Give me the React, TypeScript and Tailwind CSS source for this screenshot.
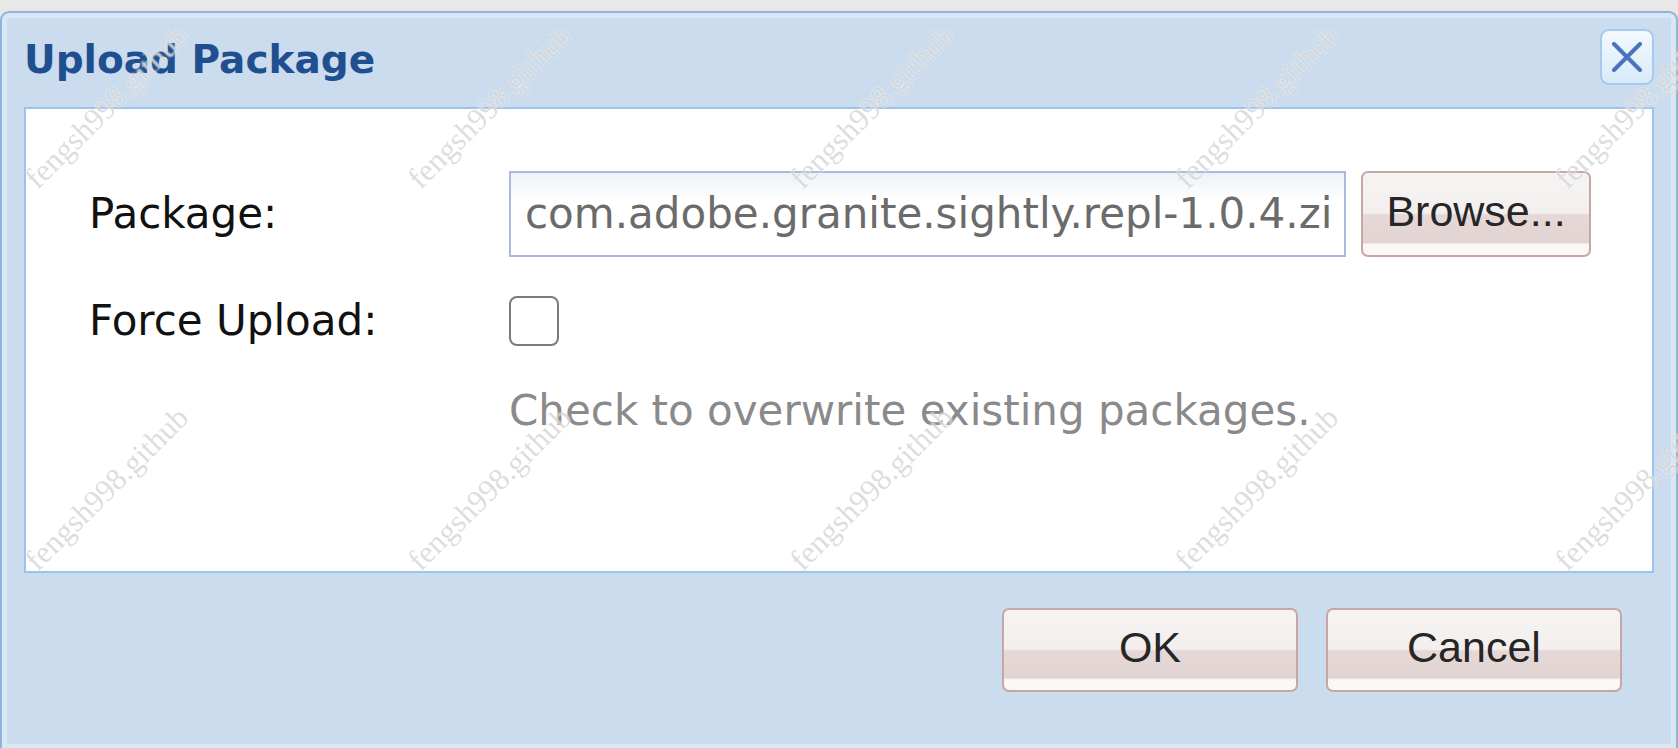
import React from "react";

const marks = [
  { x: 107, y: 107 },
  { x: 490, y: 107 },
  { x: 872, y: 107 },
  { x: 1257, y: 107 },
  { x: 1637, y: 107 },
  { x: 107, y: 489 },
  { x: 490, y: 489 },
  { x: 872, y: 489 },
  { x: 1257, y: 489 },
  { x: 1637, y: 489 },
];

const btn =
  "flex items-center justify-center rounded-[7px] border-2 border-[#c9a6a6] pb-[6px] bg-[linear-gradient(to_bottom,#f6f3f3_0%,#f3efef_49%,#e7d8d8_51%,#e3d4d4_85%,#faf7f7_87%,#faf7f7_100%)] font-['Liberation_Sans',Arial,sans-serif] text-[43px] leading-none text-[#262626]";

function Watermark({ x, y }: { x: number; y: number }) {
  return (
    <span
      className="pointer-events-none absolute -translate-x-1/2 -translate-y-1/2 -rotate-45 whitespace-nowrap font-['Liberation_Serif',serif] text-[31px] text-[rgba(165,165,165,0.38)] [text-shadow:0_0_2px_#ffffff]"
      style={{ left: x, top: y }}
    >
      fengsh998.github
    </span>
  );
}

export default function App() {
  return (
    <div className="relative h-[748px] w-[1678px] overflow-hidden bg-[#e8e8e8] pt-[11px] font-['DejaVu_Sans',Tahoma,sans-serif]">
      <div className="flex h-[740px] flex-col rounded-t-[9px] border-2 border-[#94b3da] bg-[#cadcee] shadow-[inset_0_0_0_5px_#d9e6f3]">
        {/* header */}
        <div className="flex h-[94px] items-center justify-between pl-[22px] pr-[22px]">
          <h1 className="mt-[-1px] text-[39px] font-bold leading-none text-[#1f4f8e]">
            Upload Package
          </h1>
          <button className="mt-[-6px] flex h-[56px] w-[54px] items-center justify-center rounded-[9px] border-2 border-[#a6c9ee] bg-[linear-gradient(to_bottom,#f3f9fe,#d8eaf9)]">
            <svg width="32" height="30" viewBox="0 0 32 30">
              <path
                d="M3 2 L29 28 M29 2 L3 28"
                stroke="#4b72bd"
                strokeWidth="4"
                strokeLinecap="round"
              />
            </svg>
          </button>
        </div>

        {/* form panel */}
        <div className="mx-[22px] h-[466px] border-2 border-[#9cc3ec] bg-white pl-[63px] pt-[62px]">
          <div className="flex items-center">
            <label className="w-[420px] text-[42px] leading-none text-[#111]">Package:</label>
            <div className="flex h-[86px] w-[837px] items-center overflow-hidden whitespace-nowrap border-2 border-[#aab9dc] bg-[linear-gradient(to_bottom,#eef2f7,#ffffff_35%)] pl-[14px] text-[42px] leading-none text-[#6b6b6b]">
              com.adobe.granite.sightly.repl-1.0.4.zi
            </div>
            <button className={`${btn} ml-[15px] h-[86px] w-[230px]`}>Browse...</button>
          </div>

          <div className="mt-[39px] flex items-center">
            <label className="w-[420px] text-[42px] leading-none text-[#111]">Force Upload:</label>
            <span className="block h-[50px] w-[50px] rounded-[8px] border-2 border-[#7a7a7a] bg-white" />
          </div>

          <p className="ml-[420px] mt-[44px] text-[42px] leading-none text-[#8a8a8a]">
            Check to overwrite existing packages.
          </p>
        </div>

        {/* footer */}
        <div className="flex justify-end gap-[28px] pr-[54px] pt-[35px]">
          <button className={`${btn} h-[84px] w-[296px]`}>OK</button>
          <button className={`${btn} h-[84px] w-[296px]`}>Cancel</button>
        </div>
      </div>

      {marks.map((m, i) => (
        <Watermark key={i} x={m.x} y={m.y} />
      ))}
    </div>
  );
}
